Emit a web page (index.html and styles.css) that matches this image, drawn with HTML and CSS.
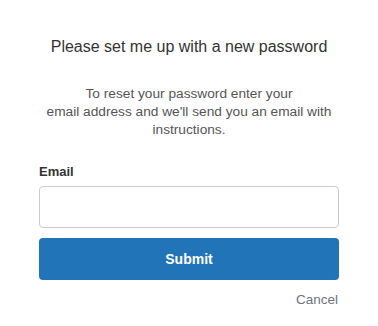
FILE: index.html
```html
<!DOCTYPE html>
<html>
<head>
<meta charset="utf-8">
<link rel="stylesheet" href="styles.css">
</head>
<body>
<div class="wrap">
  <h1 class="title">Please set me up with a new password</h1>
  <p class="desc">To reset your password enter your<br>email address and we'll send you an email with<br>instructions.</p>
  <form class="form">
    <label class="label" for="email">Email</label>
    <input class="input" id="email" type="email">
    <button class="btn" type="button">Submit</button>
    <div class="cancel-row"><a class="cancel" href="#">Cancel</a></div>
  </form>
</div>
</body>
</html>
```
FILE: styles.css
```css
html, body {
  margin: 0;
  padding: 0;
  background: #fff;
}
body {
  font-family: "Liberation Sans", Arial, sans-serif;
}
.wrap {
  width: 300px;
  margin: 0 auto;
  padding-top: 37px;
}
.title {
  margin: 0;
  font-size: 16px;
  font-weight: normal;
  line-height: 20px;
  color: #333;
  text-align: center;
}
.desc {
  margin: 28px 0 0;
  font-size: 13.7px;
  line-height: 18px;
  color: #555;
  text-align: center;
}
.form {
  display: flex;
  flex-direction: column;
  margin-top: 25px;
}
.label {
  font-size: 13px;
  font-weight: bold;
  color: #333;
  line-height: 16px;
}
.input {
  margin-top: 6px;
  height: 42px;
  box-sizing: border-box;
  border: 1px solid #ccc;
  border-radius: 4px;
  padding: 0 10px;
  font-size: 14px;
}
.btn {
  margin-top: 10px;
  height: 42px;
  border: none;
  border-radius: 4px;
  background: #2174b8;
  color: #fff;
  font-family: inherit;
  font-size: 14px;
  font-weight: bold;
}
.cancel-row {
  display: flex;
  justify-content: flex-end;
  margin-top: 11.5px;
  padding-right: 1px;
}
.cancel {
  font-size: 13.5px;
  line-height: 16px;
  color: #6e747b;
  text-decoration: none;
}
```
